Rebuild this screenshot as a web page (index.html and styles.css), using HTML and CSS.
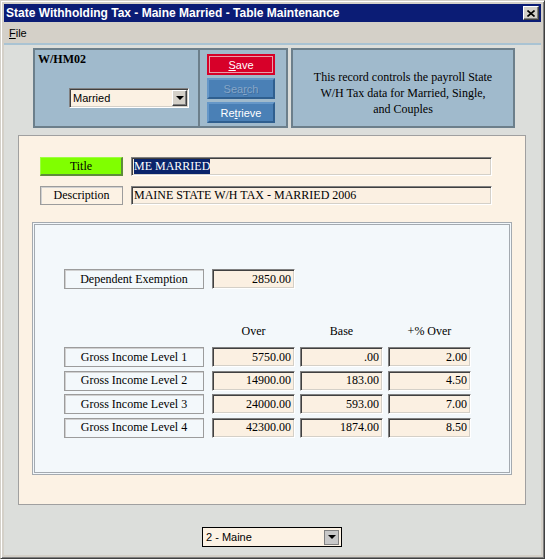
FILE: index.html
```html
<!DOCTYPE html>
<html>
<head>
<meta charset="utf-8">
<link rel="stylesheet" href="styles.css">
</head>
<body>
<div class="window">
  <div class="titlebar">
    <span class="title">State Withholding Tax - Maine Married - Table Maintenance</span>
    <span class="close"><svg width="8" height="7" viewBox="0 0 8 7"><path d="M0.5 0.5 L7.5 6.5 M7.5 0.5 L0.5 6.5" stroke="#000" stroke-width="1.6" fill="none"/></svg></span>
  </div>
  <div class="menubar"><span><u>F</u>ile</span></div>
  <div class="sep"></div>
  <div class="content">
    <div class="toprow">
      <div class="panel p1">
        <div class="code">W/HM02</div>
        <div class="combo married"><span>Married</span><span class="ddbtn"><i class="tri"></i></span></div>
      </div>
      <div class="panel p2">
        <div class="btn save"><u>S</u>ave</div>
        <div class="btn blue disabled">Sea<u>r</u>ch</div>
        <div class="btn blue">Re<u>t</u>rieve</div>
      </div>
      <div class="panel p3">
        This record controls the payroll State<br>W/H Tax data for Married, Single,<br>and Couples
      </div>
    </div>
    <div class="main">
      <div class="formrow">
        <div class="lbl green">Title</div>
        <div class="field wide"><span class="sel">ME MARRIED</span></div>
      </div>
      <div class="formrow second">
        <div class="lbl">Description</div>
        <div class="field wide">MAINE STATE W/H TAX - MARRIED 2006</div>
      </div>
      <div class="inner">
        <div class="deprow">
          <div class="lbl long">Dependent Exemption</div>
          <div class="field num">2850.00</div>
        </div>
        <div class="grid hdr">
          <div></div><div class="h">Over</div><div class="h">Base</div><div class="h">+% Over</div>
        </div>
        <div class="grid rows">
          <div class="lbl long">Gross Income Level 1</div>
          <div class="field num">5750.00</div><div class="field num">.00</div><div class="field num">2.00</div>
          <div class="lbl long">Gross Income Level 2</div>
          <div class="field num">14900.00</div><div class="field num">183.00</div><div class="field num">4.50</div>
          <div class="lbl long">Gross Income Level 3</div>
          <div class="field num">24000.00</div><div class="field num">593.00</div><div class="field num">7.00</div>
          <div class="lbl long">Gross Income Level 4</div>
          <div class="field num">42300.00</div><div class="field num">1874.00</div><div class="field num">8.50</div>
        </div>
      </div>
    </div>
    <div class="combo state"><span>2 - Maine</span><span class="ddbtn flat"><i class="tri"></i></span></div>
  </div>
</div>
</body>
</html>
```
FILE: styles.css
```css
html, body { margin: 0; padding: 0; background: #ffffff; }
.window {
  width: 545px; height: 559px; box-sizing: border-box;
  border: 1px solid; border-color: #d4d0c8 #404040 #404040 #d4d0c8;
  box-shadow: inset 1px 1px 0 #ffffff, inset -1px -1px 0 #808080;
  padding: 3px; background: #d4d0c8;
  display: flex; flex-direction: column;
}
.titlebar {
  height: 18px; background: #0b1c75; color: #fff;
  display: flex; align-items: center; justify-content: space-between;
  font: bold 12px "Liberation Sans", Arial, sans-serif;
  padding-left: 2px;
}
.title { white-space: nowrap; }
.close {
  width: 16px; height: 14px; box-sizing: border-box; margin-right: 2px;
  background: #d4d0c8; border: 1px solid; border-color: #ffffff #404040 #404040 #ffffff;
  box-shadow: inset -1px -1px 0 #808080;
  display: flex; align-items: center; justify-content: center;
}
.menubar {
  height: 21px; display: flex; align-items: center; padding-left: 5px;
  font: 11px "Liberation Sans", Arial, sans-serif; color: #000;
}
.sep { height: 2px; background: #a9c3d3; }
.content {
  flex: 1; background: #dcdedb;
  padding: 3px 15px 0 14px;
  display: flex; flex-direction: column;
}
.toprow { display: flex; height: 80px; margin-left: 15px; }
.panel { background: #a0bacc; border: 2px solid #6c7f8b; box-sizing: border-box; height: 80px; }
.p1 { width: 167px; padding: 2px 0 0 3px; }
.code { font: bold 12px "Liberation Serif", "Times New Roman", serif; line-height: 14px; color: #000; }
.combo {
  box-sizing: border-box; display: flex; align-items: center; justify-content: space-between;
  font: 11px "Liberation Sans", Arial, sans-serif; color: #000;
}
.married {
  width: 120px; height: 20px; margin: 22px 0 0 31px;
  border: 1px solid; border-color: #808080 #ffffff #ffffff #808080;
  box-shadow: inset 1px 1px 0 #404040, inset -1px -1px 0 #d4d0c8;
  background: #fbf1e3; padding-left: 3px;
}
.ddbtn {
  width: 15px; height: 16px; box-sizing: border-box; margin-right: 1px;
  background: #d4d0c8; border: 1px solid; border-color: #ffffff #404040 #404040 #ffffff;
  box-shadow: inset -1px -1px 0 #808080;
  display: flex; align-items: center; justify-content: center;
}
.tri { width: 0; height: 0; border-left: 4px solid transparent; border-right: 4px solid transparent; border-top: 4px solid #000; }
.p2 { width: 88px; border-left: none; padding: 4px 0 0 7px; }
.btn {
  width: 68px; height: 21px; box-sizing: border-box; margin-bottom: 3px;
  display: flex; align-items: center; justify-content: center;
  font: 11px "Liberation Sans", Arial, sans-serif; color: #fff;
}
.save { background: #d70029; box-shadow: inset 0 0 0 2px #d70029, inset 0 0 0 3px #e6a0aa; }
.blue { background: #4a80b6; border: 2px solid; border-color: #6597c8 #2f5f8f #2f5f8f #6597c8; }
.disabled { color: #86a6c8; text-shadow: 1px 1px 0 #3f6f9f; }
.p3 {
  width: 224px; margin-left: 3px; padding-top: 19px; text-align: center;
  font: 12px "Liberation Serif", "Times New Roman", serif; line-height: 16px; color: #000;
}
.main {
  width: 508px; height: 370px; box-sizing: border-box; margin-top: 7px;
  border: 1px solid #a0a0a0; background: #fcf2e4;
  padding: 21px 0 0 13px;
  font: 12px "Liberation Serif", "Times New Roman", serif; color: #000;
}
.formrow { display: flex; align-items: center; gap: 8px; margin-left: 8px; height: 19px; }
.formrow.second { margin-top: 10px; }
.lbl {
  box-sizing: border-box; display: flex; align-items: center; justify-content: center;
  border: 1px solid #9c9c9c; box-shadow: inset 1px 1px 0 #d0d0d0;
  width: 83px; height: 19px; white-space: nowrap;
}
.lbl.green { background: #80ff00; border-color: #9cff40 #5e8c3a #5e8c3a #9cff40; border-width: 1px 2px 2px 1px; box-shadow: none; }
.field {
  box-sizing: border-box; height: 19px; display: flex; align-items: center;
  border: 1px solid; border-color: #808080 #ffffff #ffffff #808080;
  box-shadow: inset 1px 1px 0 #404040, inset -1px -1px 0 #d4d0c8;
  background: #fbf0e2; padding-left: 2px; white-space: nowrap;
}
.wide { width: 361px; }
.sel { background: #0a246a; color: #fff; }
.inner {
  width: 480px; height: 253px; box-sizing: border-box; margin-top: 17px;
  border: 3px double #a4aab0; background: #f3f8fb;
  padding: 44px 0 0 29px;
}
.deprow { display: flex; gap: 8px; height: 20px; }
.lbl.long { width: 140px; height: 20px; }
.num { width: 83px; height: 20px; justify-content: flex-end; padding: 0 3px 0 0; }
.grid { display: grid; grid-template-columns: 143px 83px 83px 83px; column-gap: 5px; }
.hdr { margin-top: 34px; height: 16px; margin-bottom: 8px; }
.h { text-align: center; line-height: 16px; }
.rows { grid-auto-rows: 20px; row-gap: 3.67px; }
.rows .num { width: 83px; }
.state {
  width: 140px; height: 20px; margin: 22px auto 0;
  border: 1px solid #000; background: #fcf2e4; padding-left: 3px;
}
.ddbtn.flat { background: #c8c8c8; border: 1px solid #808080; box-shadow: none; width: 15px; height: 15px; margin-right: 2px; }
```
